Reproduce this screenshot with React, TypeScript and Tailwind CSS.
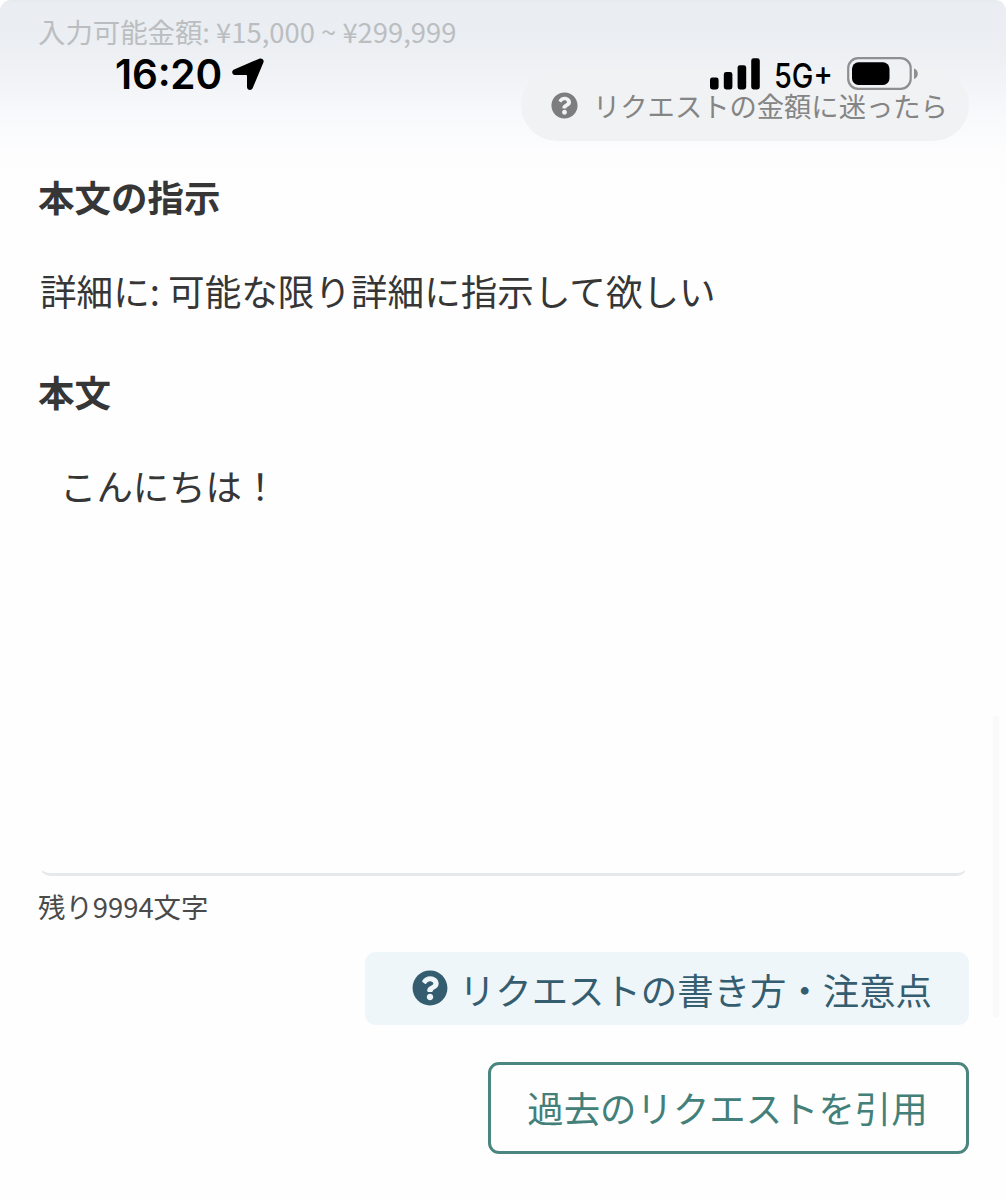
import React, { ReactNode } from 'react';
import { FaQuestionCircle } from 'react-icons/fa';

const SectionTitle: React.FC<{ children: ReactNode }> = ({ children }) => (
  <h2 className="h-[54px] text-[36.5px] leading-[54px] font-bold text-[#363636]">{children}</h2>
);

const SignalIcon = () => (
  <svg className="w-[50px] h-8" viewBox="0 0 50 32" fill="currentColor">
    <rect x="0" y="19.5" width="8.6" height="12" rx="2.4" />
    <rect x="13.8" y="14" width="8.6" height="17.5" rx="2.4" />
    <rect x="27.6" y="7.2" width="8.6" height="24.3" rx="2.4" />
    <rect x="41.2" y="0.3" width="8.6" height="31.2" rx="2.4" />
  </svg>
);

const BatteryIcon = () => (
  <svg className="w-[72px] h-[34px]" viewBox="0 0 72 34" fill="none">
    <rect x="1.2" y="1.2" width="62.5" height="30.6" rx="10" stroke="#8e8f91" strokeWidth="2.2" />
    <rect x="5" y="5.3" width="37.5" height="22.6" rx="6.5" fill="#000" />
    <path d="M67 11.5c2.400.8 3.800 2.800 3.800 5.300s-1.400 4.500-3.800 5.300z" fill="#8e8f91" />
  </svg>
);

const StatusBar = () => (
  <div className="absolute inset-x-0 top-0 h-[98px] text-black">
    <div className="flex items-center pt-[50px] pl-[115px] pr-[87px] h-[98px]">
      <span className="w-[107px] mt-[2px] font-['Inter'] text-[40.5px] leading-[50px] font-semibold tracking-[-0.2px] whitespace-nowrap">
        16<span className="relative -top-[3px]">:</span>20
      </span>
      <svg className="ml-[10px] w-8 h-8" viewBox="0 0 32 32" fill="currentColor">
        <path d="M27.200.7 2.100 11.500C-.8 12.800-.3 17 2.900 17H14c.6 0 1 .4 1 1v11c0 3.200 4.200 4.100 5.600 1.300L31.400 4.500C32.600 1.900 29.800-.4 27.200.7z" />
      </svg>
      <div className="ml-auto flex items-center">
        <SignalIcon />
        <span className="ml-[14px] mr-[15px] w-[58px] mt-[3px] font-['Inter'] text-[34px] leading-[40px] font-medium origin-left scale-x-[0.85] whitespace-nowrap">5G+</span>
        <BatteryIcon />
      </div>
    </div>
  </div>
);

export default function App() {
  return (
    <div className="relative w-[1006px] h-[1200px] overflow-hidden bg-white font-['Noto_Sans_CJK_JP',sans-serif]">
      <div className="h-full rounded-t-[11px] bg-[linear-gradient(to_bottom,#e6e9ee_0px,#eaedf2_4px,#ebeef2_40px,#f2f4f7_85px,#f9fafc_122px,#fdfdfe_155px,#fefefe_200px)]">
        <main className="flex flex-col pl-[38px] pr-[37px] pt-[11px]">
          <p className="h-10 text-[27.4px] leading-[40px] text-[#bbbec1]">入力可能金額: ¥15,000 ~ ¥299,999</p>
          <button className="mt-[18px] self-end flex items-center w-[448px] h-[72px] pl-[30px] rounded-full bg-[#f1f2f3] text-[#858585] text-[27.3px]">
            <FaQuestionCircle className="size-[27px] mr-[15px] text-[#7d7d7f]" />
            <span className="whitespace-nowrap leading-[40px]">リクエストの金額に迷ったら</span>
          </button>

          <div className="mt-[29px]">
            <SectionTitle>本文の指示</SectionTitle>
          </div>
          <p className="mt-[40px] h-[54px] pl-[2px] text-[36.6px] leading-[54px] text-[#363636]">詳細に: 可能な限り詳細に指示して欲しい</p>

          <div className="mt-[47px]">
            <SectionTitle>本文</SectionTitle>
          </div>
          <div className="mx-[2px] h-[457px] pt-[39px] px-[20px] rounded-[10px] border-b-3 border-[#e6e9ec] text-[36.4px] leading-[54px] text-[#363636] [clip-path:inset(0_2px_0_2px)]">
            こんにちは！
          </div>
          <p className="mt-[10px] h-10 text-[27.4px] leading-[40px] text-[#4a4a4a]">残り9994文字</p>

          <button className="mt-[26px] self-end flex items-center justify-end w-[604px] h-[73px] pr-[37px] rounded-[11px] bg-[#eef6fa] text-[#355d70] text-[36.4px] leading-[54px]">
            <FaQuestionCircle className="size-[36px] mr-[11px] mb-px" />
            <span className="whitespace-nowrap">リクエストの書き方・注意点</span>
          </button>
          <button className="mt-[37px] self-end flex items-center justify-center w-[481px] h-[92px] pb-[2px] pr-[2px] rounded-[11px] border-3 border-[#4a857f] text-[#43807a] text-[36.4px] leading-[54px]">
            過去のリクエストを引用
          </button>
        </main>
      </div>

      <StatusBar />
      {/* scroll indicator */}
      <div className="absolute right-[7px] top-[716px] w-[6px] h-[301px] rounded-[2px] bg-[#f9f9fa]" />
    </div>
  );
}
